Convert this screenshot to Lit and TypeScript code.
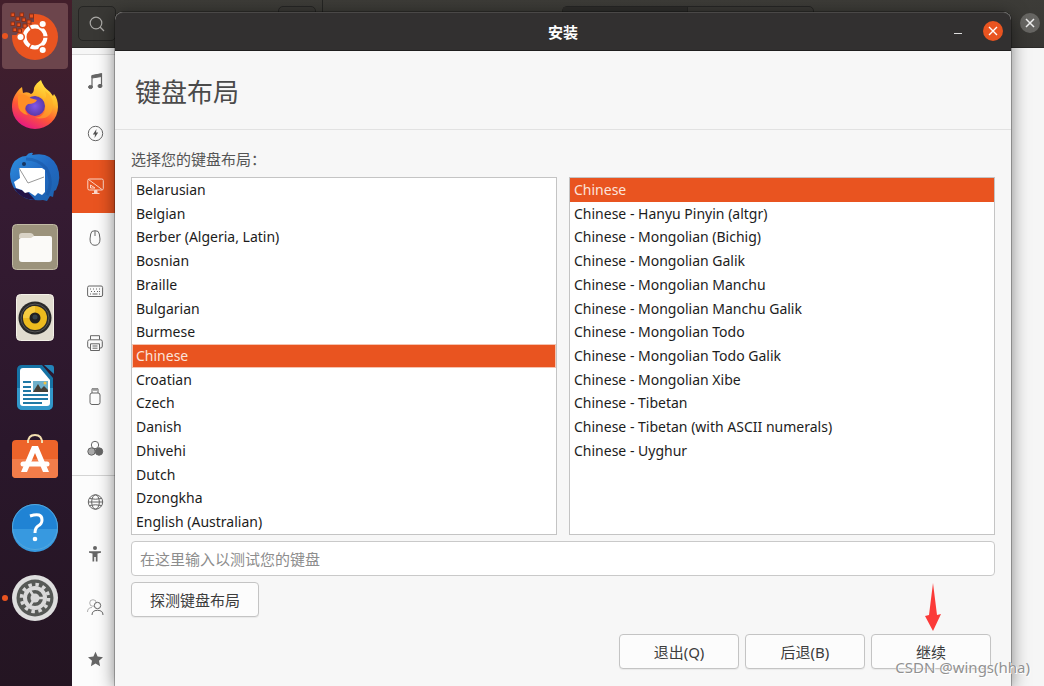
import { LitElement, html, css, svg } from "lit";
import { customElement, state } from "lit/decorators.js";

const dockIcons = [
  {
    name: "Ubiquity",
    running: true,
    active: true,
    art: svg`
      <circle cx="25" cy="28" r="23" fill="#e95420"/>
      <path d="M0 0H24V13H18V19H11V26H0Z" fill="#6c454c"/>
      <g fill="#e95420" stroke="#8a2f17" stroke-width="1">
        <rect x="1" y="4" width="3.500" height="3.500"/><rect x="10" y="4" width="3.500" height="3.500"/><rect x="19.500" y="5" width="4" height="4"/>
        <rect x="6" y="8" width="3.500" height="3.500"/><rect x="12" y="9" width="3.500" height="3.500"/><rect x="1" y="13" width="3.500" height="3.500"/>
        <rect x="7" y="14" width="3.500" height="3.500"/><rect x="13" y="15" width="4" height="4"/><rect x="3" y="19" width="3.500" height="3.500"/>
        <rect x="8" y="20" width="3.500" height="3.500"/><rect x="17" y="11" width="4" height="4"/>
      </g>
      <circle cx="25" cy="28" r="10.5" fill="none" stroke="#fff" stroke-width="4"/>
      <path d="M31 28H39M22 22L18 15M22 34L18 41" stroke="#e95420" stroke-width="1.500"/>
      <g fill="#fff" stroke="#e95420" stroke-width="1.500"><circle cx="10.500" cy="28" r="3.800"/><circle cx="32.700" cy="15" r="3.800"/><circle cx="32.700" cy="41" r="3.800"/></g>`,
  },
  {
    name: "Firefox",
    art: svg`
      <defs>
        <linearGradient id="fx" x1=".8" y1="0" x2=".3" y2="1"><stop offset="0" stop-color="#fff04a"/><stop offset=".35" stop-color="#ffb82a"/><stop offset=".65" stop-color="#ff5a33"/><stop offset="1" stop-color="#e31587"/></linearGradient>
        <radialGradient id="fp"><stop offset="0" stop-color="#8257e8"/><stop offset="1" stop-color="#5939a8"/></radialGradient>
      </defs>
      <path d="M2 28C2 20 5 16 7 13Q9 10 12 8L13 14Q18 12 21 15Q24 14 24 9Q26 4 31 1Q33 8 40 13L43 17L44 15Q48 20 48 28A23 22 0 0 1 2 28Z" fill="url(#fx)"/>
      <circle cx="25" cy="27" r="10" fill="url(#fp)"/>
      <path d="M8 17Q14 13 20 19L27 21Q25 25 18 25Q12 29 18 36Q8 34 8 25Z" fill="#ff8e25"/>
      <path d="M26 17Q34 16 35 25Q37 37 25 39Q42 42 43 26Q43 17 35 12Q38 20 33 20Z" fill="#ffad27" opacity=".6"/>`,
  },
  {
    name: "Thunderbird",
    art: svg`
      <defs><linearGradient id="tb" x1="0" y1="0" x2="1" y2="1"><stop offset="0" stop-color="#2f92e0"/><stop offset=".5" stop-color="#2269c3"/><stop offset="1" stop-color="#1c62ac"/></linearGradient></defs>
      <path d="M16 6Q19 2 23 3L22 5Q40 1 47 16Q52 28 46 40L44 41L43 47L40 46L37 51L33 50Q14 52 5 40Q0 32 0 24Q1 12 9 8Q12 6 16 6Z" fill="url(#tb)"/>
      <path d="M4 38Q10 49 25 50L18 42Z" fill="#241345"/>
      <path d="M9 18L32 18L35 20L35 42L32 45L28 43L25 46L19 42L15 43L12 40L6 38L4 32L10 28Z" fill="#fff"/>
      <path d="M9 18L18 33L34 27" fill="none" stroke="#999" stroke-width="1"/>
      <path d="M16 9Q28 9 36 18Q44 32 37 45" fill="none" stroke="#174f9d" stroke-width="3" opacity=".45"/>
      <circle cx="14" cy="14" r="2" fill="#163661"/>`,
  },
  {
    name: "Files",
    art: svg`
      <rect x="2.5" y="4.5" width="45" height="45" rx="4" fill="#9c937c" stroke="#c2baa5"/>
      <path d="M9 16Q9 13 12 13H20Q23 13 24 16L25 18H9Z" fill="#d9d3c6"/>
      <path d="M9 20Q9 18 11 18H21L24 16H40Q42 16 42 18V39Q42 42 39 42H12Q9 42 9 39Z" fill="#fbfaf8"/>`,
  },
  {
    name: "Rhythmbox",
    art: svg`
      <rect x="6.5" y="4.500" width="37" height="46" rx="4" fill="#e1dccf" stroke="#f4f1e8"/>
      <circle cx="25" cy="28" r="16.5" fill="#292929"/>
      <circle cx="25" cy="28" r="14" fill="none" stroke="#575757"/>
      <circle cx="25" cy="28" r="12" fill="#ecba1e"/>
      <path d="M13 28A12 12 0 0 1 25 16L25 28Z" fill="#f5cc42"/>
      <circle cx="25" cy="28" r="5.500" fill="#202020"/><circle cx="25" cy="27" r="2.500" fill="#35434c"/>`,
  },
  {
    name: "LibreOffice Writer",
    art: svg`
      <path d="M7 10Q7 5 12 5H32L43 18V44Q43 50 37 50H13Q7 50 7 44Z" fill="#1673a5"/>
      <path d="M7 28H43V44Q43 50 37 50H13Q7 50 7 44Z" fill="#3297c9"/>
      <path d="M34 5H41Q44 5 44 8V14Z" fill="#2385ba"/>
      <path d="M10 11Q10 8 13 8H30L40 20V43Q40 46 37 46H13Q10 46 10 43Z" fill="#fff"/>
      <g stroke="#2179a5" stroke-width="2"><path d="M13 22H21M13 27H21M13 31H21M13 35H38M13 39H38M13 43H32"/></g>
      <path d="M23 21H38V32H23Z" fill="#6eb1cc"/><path d="M23 32L28 24L31 29L34 26L38 30V32Z" fill="#454037"/><circle cx="35" cy="23" r="1.500" fill="#eec348"/>`,
  },
  {
    name: "Ubuntu Software",
    art: svg`
      <path d="M18 12Q18 4 25 4T32 12" fill="none" stroke="#f3dfb0" stroke-width="2"/>
      <rect x="2" y="9" width="46" height="38" rx="4" fill="#ed642a"/>
      <path d="M2 28H48V43Q48 47 44 47H6Q2 47 2 43Z" fill="#f27d4a"/>
      <path d="M18 12V9M32 12V9" stroke="#f3dfb0" stroke-width="2"/>
      <path d="M22 15H28L39 41H33L25 22L17 41H11Z" fill="#fff"/>
      <path d="M13 33H37" stroke="#fff" stroke-width="5" stroke-linecap="round"/>`,
  },
  {
    name: "Help",
    art: svg`
      <circle cx="25" cy="26" r="23" fill="#2083d4"/>
      <path d="M2 28H48A23 23 0 0 1 2 28Z" fill="#3799e0"/><circle cx="25" cy="26" r="22.500" fill="none" stroke="#54a8dd"/>
      <path d="M20 15Q32 11 32 19Q32 23 28 25Q25 27 25 32" fill="none" stroke="#fff" stroke-width="3"/><circle cx="25" cy="38" r="2.300" fill="#fff"/>`,
  },
  {
    name: "Settings",
    running: true,
    art: svg`
      <circle cx="25" cy="27" r="23" fill="#dedede"/><circle cx="25" cy="27" r="18.500" fill="#565956"/>
      <circle cx="25" cy="27" r="13.500" fill="none" stroke="#d9d9d9" stroke-width="3.500" stroke-dasharray="3.500 3.568"/>
      <circle cx="25" cy="27" r="10" fill="none" stroke="#d9d9d9" stroke-width="4"/>
      <circle cx="25" cy="27" r="4.500" fill="#d9d9d9"/>
      <path d="M25 27H35M25 27L19 18M25 27L19 36" stroke="#d9d9d9" stroke-width="2.500"/>`,
  },
];

const panels = [
  { name: "Sound", art: svg`<path d="M5 14V3L14.500 1V13" fill="none" stroke="#666" stroke-width="1.200"/><path d="M5 2.500L14.500 .7V3.500L5 5Z" fill="#666"/><ellipse cx="3.500" cy="14" rx="2" ry="1.600" fill="#666"/><ellipse cx="13" cy="13" rx="2" ry="1.600" fill="#666"/>` },
  { name: "Power", art: svg`<circle cx="8.500" cy="8.500" r="7.200"/><path d="M9.500 4L5.800 9.500H8L7.500 13L11.200 7.500H9Z" fill="#555" stroke="none"/>` },
  { name: "Displays", selected: true, art: svg`<rect x=".8" y="1" width="15.500" height="11" rx="1.500"/><path d="M1.500 1.500L15 11.500M3.500 7V10H8ZM5 15.500H12.500"/><path d="M7.500 12.500H10V15H7.500Z" fill="#fbd5c7"/>` },
  { name: "Mouse", art: svg`<path d="M8 .7Q12 .5 12.300 4L13 9Q13 15.300 8 15.300T3 9L3.700 4Q4 .5 8 .7ZM8 1V6"/>` },
  { name: "Keyboard", art: svg`<rect x=".6" y="3" width="15" height="10.500" rx="1.500"/><path d="M3 6H4M6 6H7M9 6H10M12 6H13M4 8.500H5M7 8.500H8M10 8.500H11M12 8.500H13M3 11H4M5.500 11H10.500M12 11H13"/>` },
  { name: "Printers", art: svg`<path d="M3.500 4.500V.7H12.500V4.500M3 13H2Q.7 13 .7 11V6.500Q.7 4.800 2.500 4.800H13.500Q15.300 4.800 15.300 6.500V11Q15.300 13 14 13H13M3.500 8.800H12.500V15.500H3.500ZM5.500 11H10.500M5.500 13.200H10.500"/>` },
  { name: "Removable Media", art: svg`<rect x="3" y="5" width="10" height="11.500" rx="2"/><path d="M5 5V.8H11V5M7 1V3M9 1V3"/>` },
  { name: "Color", art: svg`<circle cx="8" cy="5" r="3.700"/><circle cx="4.500" cy="11.500" r="3.700" fill="#aaa"/><circle cx="12" cy="11.500" r="3.700" fill="#666"/>` },
  { name: "Region and Language", divider: true, art: svg`<circle cx="8.500" cy="8" r="7.200"/><ellipse cx="8.500" cy="8" rx="3.800" ry="7.200"/><path d="M1.500 8H15.500M2.500 4.500Q8.500 6 14.500 4.500M2.500 11.500Q8.500 10 14.500 11.500"/>` },
  { name: "Universal Access", art: svg`<g fill="#666" stroke="none"><circle cx="8" cy="2" r="2"/><path d="M2 5.200H14V6.800L10.500 7.500V15.500H8.800V11H7.200V15.500H5.500V7.500L2 6.800Z"/></g>` },
  { name: "Users", art: svg`<path d="M.5 13Q.5 8.500 5 8.500" opacity=".5"/><circle cx="6" cy="4" r="3.300" opacity=".5"/><circle cx="10.500" cy="6.500" r="3.200" fill="#fafafa"/><path d="M5 16Q5 11.300 10.500 11.300T16 16"/>` },
  { name: "Default Applications", art: svg`<path d="M8.500 .8L10.600 5.600L16 6.200L12 9.800L13.100 15.200L8.500 12.400L3.900 15.200L5 9.800L1 6.200L6.400 5.600Z" fill="#666" stroke="none"/>` },
];

const layouts = [
  "Belarusian", "Belgian", "Berber (Algeria, Latin)", "Bosnian", "Braille", "Bulgarian", "Burmese", "Chinese",
  "Croatian", "Czech", "Danish", "Dhivehi", "Dutch", "Dzongkha", "English (Australian)",
];

const variants = [
  "Chinese", "Chinese - Hanyu Pinyin (altgr)", "Chinese - Mongolian (Bichig)", "Chinese - Mongolian Galik",
  "Chinese - Mongolian Manchu", "Chinese - Mongolian Manchu Galik", "Chinese - Mongolian Todo",
  "Chinese - Mongolian Todo Galik", "Chinese - Mongolian Xibe", "Chinese - Tibetan",
  "Chinese - Tibetan (with ASCII numerals)", "Chinese - Uyghur",
];

@customElement("launcher-dock")
class LauncherDock extends LitElement {
  static styles = css`
    :host { display: flex; flex-direction: column; justify-content: space-between; box-sizing: border-box; padding: 3px 4px 55px 2px; background: linear-gradient(#431f2b, #351b32 30%, #2a172b 65%, #241522); }
    .tile { position: relative; display: grid; place-items: center; height: 66px; padding: 0; border: 0; border-radius: 4px; background: none; }
    .tile.active { background: #6c454c; }
    .tile.running::before { content: ""; position: absolute; left: 0; top: 30px; width: 6px; height: 6px; border-radius: 50%; background: #e95420; }
    svg { width: 50px; height: 54px; overflow: visible; }
  `;
  render() {
    return dockIcons.map(
      (i) => html`<button class="tile ${i.active ? "active" : ""} ${i.running ? "running" : ""}" aria-label=${i.name}>
        <svg viewBox="0 0 50 54">${i.art}</svg>
      </button>`,
    );
  }
}

@customElement("settings-window")
class SettingsWindow extends LitElement {
  static styles = css`
    :host { display: flex; flex-direction: column; background: #f6f6f6; }
    button { padding: 0; border: 0; background: none; }
    .bar { display: flex; align-items: flex-start; height: 48px; box-sizing: border-box; padding: 6px 4px 0 6px; background: linear-gradient(#3d3c38, #373633); border-bottom: 1px solid #2b2a28; }
    .bar .box { height: 35px; box-sizing: border-box; border: 1px solid #262624; border-radius: 5px; background: #393835; }
    .bar .search { display: grid; place-items: center; width: 38px; }
    .search svg { width: 18px; height: 18px; }
    .menu { width: 38px; margin-left: 162px; }
    .rule { align-self: stretch; width: 1px; margin: -6px 0 0 6px; background: #252523; }
    .stage { flex: 1; display: flex; justify-content: center; padding-left: 32px; }
    .switch { display: flex; flex: 0 1 252px; }
    .switch span { flex: 1; }
    .switch span:first-child { background: #2e2d2b; border-right: 1px solid #262624; }
    .close { display: grid; place-items: center; width: 20px; height: 20px; margin-top: 7px; border-radius: 50%; background: #666562; }
    .close svg { width: 10px; height: 10px; }
    nav { flex: 1; display: flex; flex-direction: column; width: 250px; margin-top: 6px; border-top: 1px solid #dcdcdc; background: #fcfcfc; }
    .panel { flex: 1; display: flex; align-items: center; padding-left: 15px; box-sizing: border-box; }
    .panel.divider { border-top: 1px solid #d4d4d4; }
    .panel.selected { background: #e95420; }
    .panel svg { width: 17px; height: 17px; overflow: visible; fill: none; stroke: #666; stroke-width: 1; }
    .panel.selected svg { stroke: #fbd5c7; }
  `;
  render() {
    return html`
      <header class="bar">
        <button class="box search" aria-label="Search">
          <svg viewBox="0 0 18 18" fill="none" stroke="#aaa9a6" stroke-width="1.2"><circle cx="8" cy="8" r="5.800"/><path d="M12 12L16 16"/></svg>
        </button>
        <span class="box menu"></span><span class="rule"></span>
        <span class="stage"><span class="box switch"><span></span><span></span></span></span>
        <button class="close" aria-label="Close settings"><svg viewBox="0 0 10 10" stroke="#eee" stroke-width="1.5"><path d="M1 1L9 9M9 1L1 9"/></svg></button>
      </header>
      <nav>
        ${panels.map(
          (p) => html`<button class="panel ${p.selected ? "selected" : ""} ${p.divider ? "divider" : ""}" aria-label=${p.name}>
            <svg viewBox="0 0 17 17">${p.art}</svg>
          </button>`,
        )}
      </nav>`;
  }
}

@customElement("installer-window")
class InstallerWindow extends LitElement {
  @state() layout = "Chinese";
  @state() variant = "Chinese";

  static styles = css`
    :host { display: flex; flex-direction: column; border-radius: 8px 8px 0 0; background: #f7f7f7; box-shadow: 0 0 0 1px rgba(0, 0, 0, .25), 0 3px 18px rgba(0, 0, 0, .5); color: #3d3d3d; }
    button, input { font: inherit; color: inherit; }
    .title { display: grid; grid-template-columns: 1fr auto 1fr; align-items: center; height: 39px; box-sizing: border-box; padding: 0 8px; border-top: 1px solid #4a4847; border-bottom: 1px solid #1f1e1e; border-radius: 8px 8px 0 0; background: #323030; color: #fff; }
    .title h1 { grid-column: 2; margin: 0; font-size: 15px; line-height: 20px; font-weight: 700; }
    .controls { display: flex; justify-content: flex-end; gap: 15px; padding-bottom: 2px; }
    .controls button { display: grid; place-items: center; width: 20px; height: 20px; padding: 0; border: 0; border-radius: 50%; background: none; }
    .controls .close { background: #e95420; }
    .controls svg { width: 10px; height: 10px; }
    h2 { margin: 0; padding: 22px 20px 18px; font-size: 26px; line-height: 38px; font-weight: 400; color: #4a4a4a; border-bottom: 1px solid #e2e2e2; }
    .page { display: flex; flex-direction: column; padding: 18px 16px 0; }
    .caption { margin-bottom: 7px; font-size: 15px; line-height: 22px; color: #555; }
    .lists { display: grid; grid-template-columns: 1fr 1fr; gap: 12px; }
    .list { display: grid; grid-template-rows: repeat(15, 1fr); height: 358px; box-sizing: border-box; border: 1px solid #c4c4c4; background: #fff; }
    .list button { display: flex; align-items: center; min-height: 0; padding: 0 4px; border: 0; background: none; font-size: 14px; line-height: 20px; color: #1c1c1c; text-align: left; white-space: nowrap; }
    .list button[aria-selected="true"] { background: #e95420; color: #fbe3da; }
    .list.focused button[aria-selected="true"] { box-shadow: inset 0 0 0 1px #f5c3b0; }
    .entry { height: 35px; box-sizing: border-box; margin-top: 6px; padding: 0 8px; border: 1px solid #c9c9c9; border-radius: 4px; background: #fff; font-size: 15px; }
    .entry::placeholder { color: #8d8d8d; opacity: 1; }
    .push { height: 35px; box-sizing: border-box; padding: 0 17px; border: 1px solid #c4c4c4; border-radius: 4px; background: #fcfcfc; font-size: 15px; box-shadow: 0 1px 1px rgba(0, 0, 0, .06); }
    .detect { align-self: flex-start; width: 128px; margin-top: 6px; }
    .actions { display: flex; justify-content: flex-end; gap: 6px; padding: 17px 4px; }
    .actions .push { width: 120px; }
    .next { position: relative; }
    .arrow { position: absolute; left: 53px; top: -51px; width: 18px; height: 48px; pointer-events: none; }
  `;

  private list(items: string[], current: string, label: string, pick: (v: string) => void, focused: boolean) {
    return html`<div class="list ${focused ? "focused" : ""}" role="listbox" aria-label=${label}>
      ${items.map((v) => html`<button role="option" aria-selected=${v === current ? "true" : "false"} @click=${() => pick(v)}>${v}</button>`)}
    </div>`;
  }

  render() {
    return html`
      <header class="title">
        <h1>安装</h1>
        <div class="controls">
          <button aria-label="Minimize"><svg viewBox="0 0 10 10" stroke="#ddd"><path d="M1 7.500H9"/></svg></button>
          <button class="close" aria-label="Close"><svg viewBox="0 0 10 10" stroke="#fff" stroke-width="1.4"><path d="M1 1L9 9M9 1L1 9"/></svg></button>
        </div>
      </header>
      <h2>键盘布局</h2>
      <div class="page">
        <div class="caption">选择您的键盘布局：</div>
        <div class="lists">
          ${this.list(layouts, this.layout, "键盘布局", (v) => (this.layout = v), true)}
          ${this.list(variants, this.variant, "Variant", (v) => (this.variant = v), false)}
        </div>
        <input class="entry" type="text" placeholder="在这里输入以测试您的键盘" aria-label="在这里输入以测试您的键盘" />
        <button class="push detect">探测键盘布局</button>
        <div class="actions">
          <button class="push">退出(Q)</button>
          <button class="push">后退(B)</button>
          <div class="next">
            <button class="push">继续</button>
            <svg class="arrow" viewBox="0 0 18 48"><path d="M9 0L13 32L17 31L9 48L1 33L5 32Z" fill="#fb3a38"/></svg>
          </div>
        </div>
      </div>`;
  }
}

@customElement("app-root")
class AppRoot extends LitElement {
  static styles = css`
    :host { position: relative; display: grid; grid-template-columns: 72px 1fr; height: 100vh; overflow: hidden; font-family: "Noto Sans", "Noto Sans CJK SC", sans-serif; }
    installer-window { position: absolute; left: 115px; right: 33px; top: 12px; bottom: 0; }
    .watermark { position: absolute; right: 14px; bottom: 9px; font-size: 15px; line-height: 20px; color: #919191; text-shadow: 0 0 1px #fff, 1px 1px 0 #fff; }
  `;
  render() {
    return html`
      <launcher-dock></launcher-dock>
      <settings-window></settings-window>
      <installer-window></installer-window>
      <div class="watermark">CSDN @wings(hha)</div>`;
  }
}
